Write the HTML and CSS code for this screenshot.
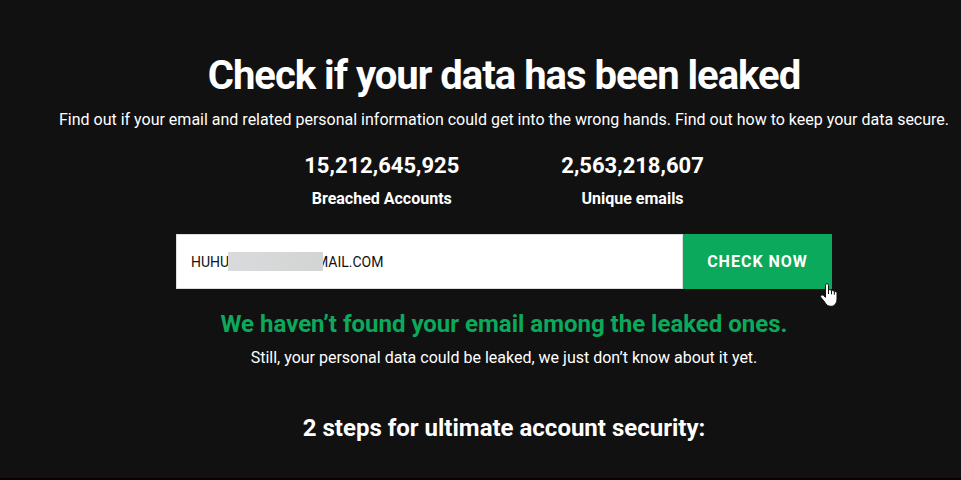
FILE: index.html
```
<!doctype html>
<html lang="en">
<head>
<meta charset="utf-8">
<title>Data leak checker</title>
<link rel="stylesheet" href="styles.css">
</head>

<body>
<main class="checker">
	<h1 class="title">Check if your data has been leaked</h1>
	<p class="intro">Find out if your email and related personal information could get into the wrong hands. Find out how to keep your data secure.</p>

	<div class="stats">
		<div class="stat">
			<div class="stat-number">15,212,645,925</div>
			<div class="stat-label">Breached Accounts</div>
		</div>
		<div class="stat">
			<div class="stat-number">2,563,218,607</div>
			<div class="stat-label">Unique emails</div>
		</div>
	</div>

	<form class="search">
		<input class="search-input" type="text" aria-label="Email address" value="HUHU                         MAIL.COM">
		<span class="mask"></span>
		<button class="search-btn" type="button">CHECK NOW</button>
		<svg class="cursor" width="18" height="24" viewBox="0 0 18 24" aria-hidden="true">
			<path d="M5.500 2.300C5.500.2 8.500.2 8.500 2.300V7C9.500 6.200 11.200 6.700 11.500 7.800C12.500 7.200 14 7.600 14.300 8.800C15.600 8.200 17 9 17 10.500V15.500C17 20 14.800 23.300 11 23.300C7.800 23.300 6.200 21.800 4.800 19.200L1 14.500C-.2 12.800 2 11.200 3.500 12.500L5.500 14.300Z" fill="#fff" stroke="#111" stroke-width="1"/>
			<path d="M8.500 7v4M11.500 7.800v3.500M14.300 8.800v3" fill="none" stroke="#111" stroke-width="1"/>
		</svg>
	</form>

	<h2 class="result">We haven’t found your email among the leaked ones.</h2>
	<p class="result-note">Still, your personal data could be leaked, we just don’t know about it yet.</p>

	<h2 class="steps">2 steps for ultimate account security:</h2>
</main>
</body>
</html>
```

FILE: styles.css
```
* {margin:0; padding:0; box-sizing:border-box;}

html {min-height:100%; background:#111;}
body {font-family:Roboto, "Liberation Sans", sans-serif; font-size:16px; line-height:24px; color:#fff; text-align:center;}

.checker {padding:51px 0 34px 47px; border-bottom:2px solid #080005;}
.title {font-size:40px; line-height:50px; font-weight:700; letter-spacing:-1px;}
.intro {margin-top:7px;}

.stats {display:flex; justify-content:center; gap:102px; margin-top:19px;}
.stat-number {font-size:22px; line-height:30px; font-weight:700;}
.stat-label {margin-top:6px; font-weight:700;}

.search {display:flex; position:relative; width:72%; max-width:656px; margin:23px auto 0; height:55px;}
.search-input {flex:1; min-width:0; padding:0 14px; border:1px solid #ddd; border-radius:0; background:#fff; color:#111; font:14px/20px Roboto, sans-serif;}
.search-btn {width:149px; border:0; background:#0ba95b; color:#fff; font:700 16px/24px Roboto, sans-serif; letter-spacing:1px;}
/* hides the middle of the address */
.mask {position:absolute; left:52px; top:18px; width:95px; height:19px; background:linear-gradient(90deg, #d9dadc, #d3d5d4);}
.cursor {position:absolute; right:-6px; top:49px;}

.result {margin-top:19px; font-size:24px; line-height:32px; font-weight:700; color:#0ba95b;}
.result-note {margin-top:6px;}
.steps {margin-top:42px; font-size:24px; line-height:32px; font-weight:700;}
```
